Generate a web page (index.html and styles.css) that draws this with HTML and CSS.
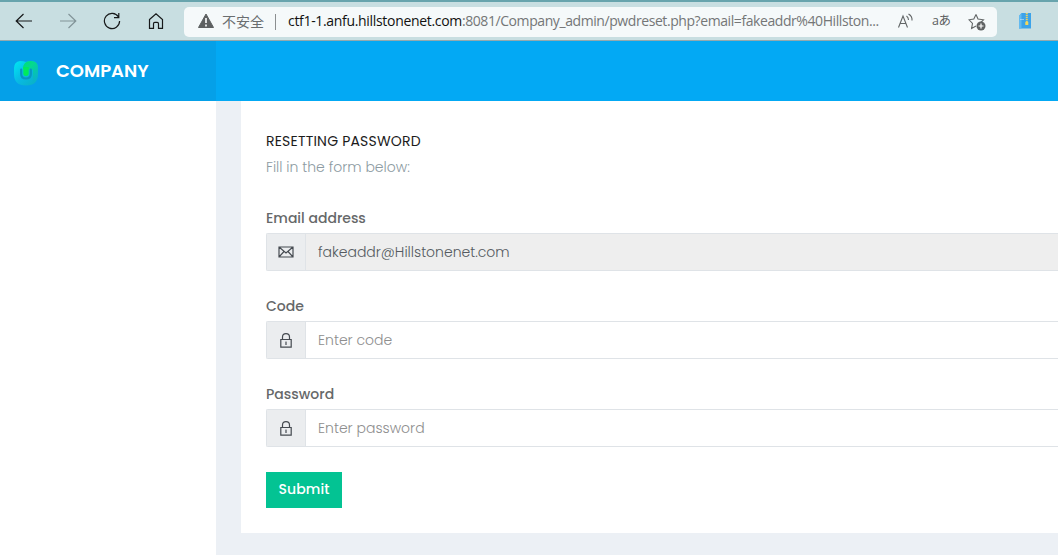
FILE: index.html
```html
<!DOCTYPE html>
<html lang="en">
<head>
<meta charset="utf-8">
<title>Reset password</title>
<link rel="stylesheet" href="styles.css">
</head>
<body>
<div class="browser">
  <nav class="nav">
    <svg width="18" height="18" viewBox="0 0 18 18"><path d="M17 9H1M8.500 2 1.200 9l7.300 7"/></svg>
    <svg class="disabled" width="18" height="18" viewBox="0 0 18 18"><path d="M1 9h16M9.500 2l7.300 7-7.300 7"/></svg>
    <svg width="18" height="18" viewBox="0 0 18 18"><path d="M15.500 5A7.600 7.600 0 1 0 16.600 9M15.800 1v4.700H11"/></svg>
    <svg width="18" height="18" viewBox="0 0 18 18"><path d="M2.500 7.500 9 1.700l6.500 5.800v8.800h-4v-4.500q0-1.500-1.300-1.500H7.800q-1.300 0-1.300 1.500v4.500h-4z"/></svg>
  </nav>
  <div class="address">
    <svg class="warn" width="16" height="16" viewBox="0 0 16 16"><path d="M8 1 15.500 14.500H.5z" fill="#5d6061" stroke="#5d6061" stroke-linejoin="round"/><path d="M8 5v5M8 11.500v2" stroke="#fff" stroke-width="1.600"/></svg>
    <span class="insecure">不安全</span>
    <span class="divider"></span>
    <span class="url"><b>ctf1-1.anfu.hillstonenet.com</b>:8081/Company_admin/pwdreset.php?email=fakeaddr%40Hillston...</span>
    <svg class="tool read" width="18" height="18" viewBox="0 0 18 18"><path d="M1.500 15.500 6 4l4.500 11.500M3 11.500h6M9.500 4q2 1.500 2 4M11.500 2q4 2.300 3.500 6.500"/></svg>
    <span class="translate">aあ</span>
    <svg class="tool star" width="18" height="18" viewBox="0 0 18 18"><path d="M8 1.500 10 6l5.500.8-3.700 3.500.5 2M8 1.500 5.800 6 1 6.800l3.500 3.600L3.600 15.500 8 13"/><circle cx="13" cy="13" r="4.500" fill="#5f6263" stroke="none"/><path d="M10.500 13h5M13 10.500v5" stroke="#fff" stroke-width="1.200"/></svg>
  </div>
  <svg class="ext" width="13" height="17" viewBox="0 0 13 17"><path d="M2.500 0H12v15.500H0V3z" fill="#3ba3ea"/><path d="M0 3 2.500 0v15.500H0z" fill="#63baf0"/><path d="M1.500 6.500h3" stroke="#d9f1ff" stroke-dasharray="1 1"/><path d="M7.800 0v11" stroke="#efd25a" stroke-width="2" stroke-dasharray="1.300 .7"/><path d="M6.300 9h3v3h-3z" fill="#f3d75c"/></svg>
</div>
<header class="topbar">
  <div class="brand">
    <svg width="26" height="26" viewBox="0 0 26 26">
      <defs><linearGradient id="body" x1="0" y1="0" x2="1" y2="1"><stop offset="0" stop-color="#00e8f2"/><stop offset=".5" stop-color="#08b9e4"/><stop offset="1" stop-color="#0ab0bf"/></linearGradient>
      <linearGradient id="hook" x1="0" y1="0" x2=".6" y2="1"><stop offset="0" stop-color="#00e070"/><stop offset=".4" stop-color="#04d990"/><stop offset="1" stop-color="#09b4c8"/></linearGradient></defs>
      <path d="M7 1q4 0 6 1 2-1 6-1 6 1 6 7v6q0 11.500-12 11.500T1 14V8q0-6 6-7z" fill="url(#body)"/>
      <path d="M10 9q0-8 8-8 7 0 7 7v6q0 6-5 8V10z" fill="url(#hook)"/>
      <path d="M8.200 9.500v4.500q0 4.500 4.800 4.500t4.800-4.500V9.500" fill="none" stroke="#0795c4" stroke-width="2.200" stroke-linecap="round"/>
      <path d="M10.300 7h5.400v6.500q0 2.500-2.700 2.500t-2.700-2.500z" fill="#00ea5c"/>
    </svg>
    <span class="name">COMPANY</span>
  </div>
</header>
<div class="layout">
  <aside class="sidebar"></aside>
  <main class="content">
    <form class="card">
      <h1>RESETTING PASSWORD</h1>
      <p>Fill in the form below:</p>
      <label>Email address</label>
      <div class="field readonly">
        <span class="addon"><svg width="16" height="12" viewBox="0 0 16 12"><path d="M1 1h14v10H1zM1 1l7 6 7-6M1 11l5-5.500M15 11l-5-5.500"/></svg></span>
        <span class="value">fakeaddr@Hillstonenet.com</span>
      </div>
      <label>Code</label>
      <div class="field">
        <span class="addon"><svg width="12" height="15" viewBox="0 0 12 15"><path d="M.8 6.500h10.400v7.700H.8zM2.500 6.500V4q0-3.300 3.500-3.300T9.500 4v2.500M6 9v3M5.500 9h1"/></svg></span>
        <span class="value">Enter code</span>
      </div>
      <label>Password</label>
      <div class="field">
        <span class="addon"><svg width="12" height="15" viewBox="0 0 12 15"><path d="M.8 6.500h10.400v7.700H.8zM2.500 6.500V4q0-3.300 3.500-3.300T9.500 4v2.500M6 9v3M5.500 9h1"/></svg></span>
        <span class="value">Enter password</span>
      </div>
      <button type="button">Submit</button>
    </form>
  </main>
</div>
</body>
</html>
```
FILE: styles.css
```css
* { box-sizing: border-box; }
body { margin: 0; height: 555px; overflow: hidden; font-family: Poppins, Inter, sans-serif; font-size: 14px; background: #fff; }
svg { flex: none; fill: none; }
.browser { height: 41px; display: flex; align-items: center; background: #c8dee1; border-top: 2px solid #68a4ad; border-bottom: 1px solid #94a9ae; }
.nav { width: 184px; flex: none; display: flex; gap: 26px; padding-left: 15px; }
.nav svg { stroke: #17191a; stroke-width: 1.200; }
.nav .disabled { stroke: #829498; }
.address { width: 813px; height: 30px; flex: none; display: flex; align-items: center; padding-left: 14px; border-radius: 5px; background: #f5f9fa; margin-top: 2px; }
.warn { margin-top: -2px; }
.insecure { width: 43px; margin: -3px 0 0 8px; font: 14px/20px "Noto Sans CJK SC", sans-serif; color: #6a6e70; white-space: nowrap; }
.divider { width: 1px; height: 16px; margin-left: 10px; background: #8b8f90; }
.url { width: 603px; margin: -2px 0 0 12px; font: 14px/20px "Open Sans", sans-serif; letter-spacing: -.42px; color: #747677; white-space: nowrap; }
.url b { font-weight: 400; color: #111; letter-spacing: -.32px; }
.tool { stroke: #626667; stroke-width: 1.100; }
.read { margin: -2px 0 0 6px; }
.translate { width: 20px; margin: -2px 0 0 17px; font: 12.500px/20px "Open Sans", "Noto Sans CJK JP", sans-serif; letter-spacing: -.4px; color: #5c6061; white-space: nowrap; }
.star { margin-left: 16px; }
.ext { margin-left: 22px; }
.topbar { height: 60px; background: #03a9f4; }
.brand { width: 216px; height: 60px; display: flex; align-items: center; padding: 3px 0 0 13px; background: #05a0e8; }
.name { margin-left: 17px; color: #fff; font-size: 18px; font-weight: 600; line-height: 24px; margin-top: -3px; }
.layout { height: 454px; display: flex; }
.sidebar { width: 216px; flex: none; background: #fff; }
.content { flex: 1; min-width: 0; padding-left: 25px; background: #ecf0f5; }
.card { height: 432px; padding: 30px 0 0 25px; background: #fff; display: flex; flex-direction: column; align-items: flex-start; }
h1 { margin: 0; height: 20px; font-size: 14px; line-height: 20px; font-weight: 400; letter-spacing: .2px; color: #1c1c1c; white-space: nowrap; }
p { margin: 6px 0 31px; height: 20px; font-size: 14px; line-height: 20px; font-weight: 300; color: #8d9ba2; white-space: nowrap; }
label { height: 20px; margin-bottom: 5px; line-height: 20px; font-weight: 500; color: #666869; white-space: nowrap; }
.field { width: 100%; height: 38px; flex: none; display: flex; margin-bottom: 25px; border: 1px solid #dfe3e7; border-right: 0; border-radius: 2px 0 0 2px; }
.addon { width: 39px; flex: none; display: flex; align-items: center; justify-content: center; background: #ebedef; border-right: 1px solid #dfe3e7; }
.addon svg { stroke: #454a50; stroke-width: 1.200; }
.value { padding-left: 12px; line-height: 36px; font-weight: 300; color: #8e8e8e; white-space: nowrap; }
.readonly { background: #eee; }
.readonly .value { color: #555b61; }
button { width: 76px; height: 36px; flex: none; padding: 0 0 2px; border: 0; background: #03c393; color: #fff; font: 500 14px/34px Poppins, Inter, sans-serif; letter-spacing: .1px; }
```
